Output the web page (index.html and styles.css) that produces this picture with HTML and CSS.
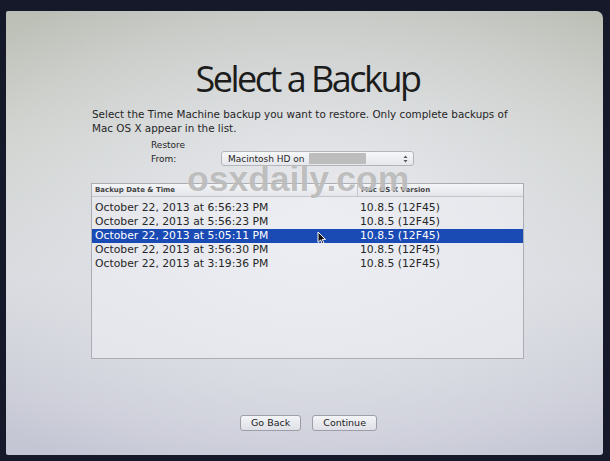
FILE: index.html
```html
<!DOCTYPE html>
<html lang="en">
<head>
    <meta charset="UTF-8">
    <title>Select a Backup</title>
    <link rel="stylesheet" href="styles.css">
</head>

<body>
    <div class="screen">
        <h1 class="title">Select a Backup</h1>

        <div class="panel">
            <p class="intro">Select the Time Machine backup you want to restore. Only complete backups of Mac OS X appear in the list.</p>

            <!-- source disk picker -->
            <div class="source">
                <div class="source-label">Restore<br>From:</div>
                <div class="popup">
                    <span>Macintosh HD on</span>
                    <span class="hidden-name"></span>
                    <span class="popup-arrows">
                        <svg width="5" height="8" viewBox="0 0 5 8"><path d="M0.5 3 L2.5 0.5 L4.5 3 Z M0.5 5 L2.5 7.5 L4.5 5 Z" fill="#555"/></svg>
                    </span>
                </div>
            </div>

            <div class="watermark">osxdaily.com</div>

            <!-- backup list -->
            <div class="backups">
                <div class="backups-head">
                    <div class="col-date">Backup Date &amp; Time</div>
                    <div class="col-version">Mac OS X Version</div>
                </div>
                <div class="row">
                    <div class="col-date">October 22, 2013 at 6:56:23 PM</div>
                    <div class="col-version">10.8.5 (12F45)</div>
                </div>
                <div class="row">
                    <div class="col-date">October 22, 2013 at 5:56:23 PM</div>
                    <div class="col-version">10.8.5 (12F45)</div>
                </div>
                <div class="row selected">
                    <div class="col-date">October 22, 2013 at 5:05:11 PM</div>
                    <div class="col-version">10.8.5 (12F45)</div>
                    <svg class="pointer" width="9" height="14" viewBox="0 0 9 14">
                        <path d="M1 1 L1 11.5 L3.6 9 L5.4 13 L7 12.3 L5.2 8.4 L8.5 8.4 Z" fill="#111" stroke="#fff" stroke-width="1" stroke-linejoin="round"/>
                    </svg>
                </div>
                <div class="row">
                    <div class="col-date">October 22, 2013 at 3:56:30 PM</div>
                    <div class="col-version">10.8.5 (12F45)</div>
                </div>
                <div class="row">
                    <div class="col-date">October 22, 2013 at 3:19:36 PM</div>
                    <div class="col-version">10.8.5 (12F45)</div>
                </div>
            </div>
        </div>

        <div class="actions">
            <button class="btn">Go Back</button>
            <button class="btn">Continue</button>
        </div>
    </div>
</body>
</html>
```

FILE: styles.css
```css
body {
    margin: 0;
    height: 461px;
    overflow: hidden;
    background-color: #16192a;
    font-family: 'DejaVu Sans', sans-serif;
    color: #262626;
}

.screen {
    margin: 11px 7px 0 6px;
    height: 444px;
    box-sizing: border-box;
    padding-left: 6px;
    border-radius: 2px 7px 3px 2px;
    background:
        radial-gradient(ellipse 70% 65% at 52% 50%, rgba(236, 238, 243, 0.95) 0%, rgba(226, 228, 234, 0.7) 45%, rgba(226, 228, 234, 0) 100%),
        linear-gradient(180deg, #bcbfb6 0%, #cdd0c9 30%, #d6d8dc 60%, #c4c5d4 100%);
    display: flex;
    flex-direction: column;
    align-items: center;
}

.title {
    margin: 46px 0 0;
    font-family: 'Open Sans', sans-serif;
    font-weight: 400;
    font-size: 36px;
    line-height: 44px;
    letter-spacing: -2.5px;
    color: #1c1c1c;
}

.panel {
    position: relative;
    width: 433px;
    margin-top: 6px;
}

.intro {
    margin: 0 0 0 1px;
    font-size: 10.4px;
    line-height: 14px;
}

.source {
    display: flex;
    align-items: flex-end;
    margin: 3px 0 0 60px;
}

.source-label {
    width: 70px;
    font-size: 9px;
    line-height: 14px;
}

.popup {
    display: flex;
    align-items: center;
    width: 193px;
    height: 15px;
    box-sizing: border-box;
    padding: 0 5px 0 6px;
    border: 1px solid #b4b5bb;
    border-radius: 3px;
    background: linear-gradient(180deg, #f6f7f9, #e6e7ec);
    font-size: 9px;
}

.hidden-name {
    width: 57px;
    height: 11px;
    margin-left: 4px;
    background-color: #bebdbd;
}

.popup-arrows {
    margin-left: auto;
    display: flex;
}

/* site stamp laid over the list header */
.watermark {
    position: absolute;
    top: 59px;
    left: 96px;
    font-family: 'Liberation Sans', sans-serif;
    font-weight: 700;
    font-size: 35.5px;
    line-height: 26px;
    color: rgba(150, 150, 150, 0.6);
    text-shadow: 0 0 1px rgba(255, 255, 255, 0.8);
    pointer-events: none;
    z-index: 2;
}

.backups {
    margin-top: 17px;
    height: 176px;
    box-sizing: border-box;
    border: 1px solid #acadb4;
    background-color: rgba(236, 238, 244, 0.6);
}

.backups-head {
    display: flex;
    height: 12px;
    border-bottom: 1px solid #c4c5cb;
    background: linear-gradient(180deg, #f4f5f7, #e4e5ea);
    font-size: 7px;
    font-weight: 700;
    line-height: 12px;
    color: #444;
}

.backups-head .col-date {
    border-right: 1px solid #c4c5cb;
}

.col-date {
    width: 262px;
    padding-left: 3px;
}

.col-version {
    padding-left: 3px;
}

.row {
    position: relative;
    display: flex;
    height: 14px;
    font-size: 10.8px;
    line-height: 14px;
}

.backups-head + .row {
    margin-top: 4px;
}

.row.selected {
    background-color: #1a4bb4;
    color: #fff;
}

.pointer {
    position: absolute;
    left: 225px;
    top: 2px;
}

.actions {
    display: flex;
    gap: 11px;
    margin-top: 56px;
    margin-left: 2px;
}

.btn {
    height: 16px;
    padding: 0 10px;
    border: 1px solid #9d9ea8;
    border-radius: 3px;
    background: linear-gradient(180deg, #f3f4f7, #dfe0e6);
    font-family: 'DejaVu Sans', sans-serif;
    font-size: 9.5px;
    line-height: 14px;
    color: #222;
}
```
